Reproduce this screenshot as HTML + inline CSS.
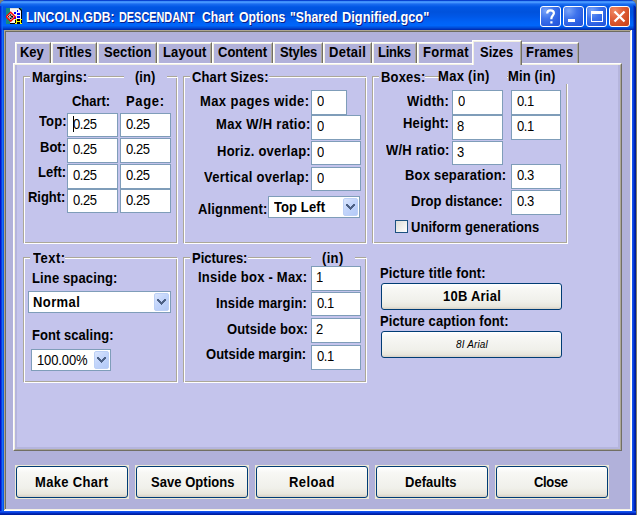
<!DOCTYPE html><html><head><meta charset="utf-8"><style>
html,body{margin:0;padding:0;width:637px;height:515px;overflow:hidden;background:#808070;}
body{position:relative;font-family:"Liberation Sans",sans-serif;}
.b{position:absolute;}
.t{position:absolute;white-space:nowrap;line-height:15px;height:15px;color:#000;transform:scaleY(1.1);transform-origin:0 12px;}
</style></head><body>
<div class="b" style="left:0px;top:0px;width:636px;height:515px;background:#0831d9;border-radius:6px 6px 0 0;"></div>
<div class="b" style="left:0;top:0;width:636px;height:30px;border-radius:6px 6px 0 0;background:linear-gradient(#0842d0 0px,#0842d0 0.6px,#3a8cf8 1.2px,#4696ff 2.5px,#1a6cf0 4px,#0056e4 7px,#0052dc 12px,#0058e8 17px,#0062f6 22px,#0066fa 25.5px,#0050dc 27.5px,#0038c0 29px,#0028a8 30px);"></div>
<div class="b" style="left:0px;top:30px;width:4px;height:485px;background:linear-gradient(90deg,#0010c8 0px,#0010c8 1px,#0a3ce0 1px,#0a3ce0 2px,#1870f8 2px,#1870f8 3px,#0a56ea 3px,#0a56ea 4px);"></div>
<div class="b" style="left:0;top:6px;width:3px;height:24px;background:linear-gradient(90deg,#0016c0 0px,#0016c0 1px,#0a4ce8 1px,#0a4ce8 2px,#1668f6 2px,#1668f6 3px);opacity:0.7;"></div>
<div class="b" style="left:631px;top:5px;width:5px;height:25px;border-top-right-radius:4px;background:linear-gradient(90deg,rgba(0,40,200,0) 0px,rgba(0,40,200,0) 2px,rgba(0,30,170,0.8) 3px,#001890 5px);"></div>
<div class="b" style="left:632px;top:30px;width:4px;height:485px;background:linear-gradient(90deg,#1a5cf0 0px,#0a40e0 1.5px,#0028b8 2.5px,#001890 4px);"></div>
<div class="b" style="left:0px;top:511px;width:636px;height:4px;background:linear-gradient(#1a5cf0 0px,#0a40e0 1.5px,#0028b8 2.5px,#001890 4px);"></div>
<div class="b" style="left:4px;top:30px;width:628px;height:481px;background:#b1b1da;"></div>
<div class="b" style="left:4px;top:30px;width:628px;height:1px;background:#aea68e;"></div>
<div class="b" style="left:4px;top:30px;width:1px;height:481px;background:#aea68e;"></div>
<div class="b" style="left:5px;top:31px;width:626px;height:1px;background:#6e6c60;"></div>
<div class="b" style="left:5px;top:31px;width:1px;height:479px;background:#6e6c60;"></div>
<div class="b" style="left:630px;top:31px;width:1px;height:479px;background:#f4f1e4;"></div>
<div class="b" style="left:631px;top:30px;width:1px;height:481px;background:#ffffff;"></div>
<div class="b" style="left:5px;top:509px;width:626px;height:1px;background:#f4f1e4;"></div>
<div class="b" style="left:4px;top:510px;width:628px;height:1px;background:#ffffff;"></div>
<svg class="b" style="left:6px;top:8px" width="16" height="16" viewBox="0 0 16 16" shape-rendering="crispEdges">
<rect x="0" y="0" width="4" height="16" fill="#178a80"/>
<rect x="4" y="0" width="11" height="15" fill="#f6f6f6"/>
<rect x="4" y="0" width="9" height="1" fill="#dcdcdc"/>
<rect x="14" y="0" width="2" height="2" fill="#178a80"/>
<path d="M13 0 L15.5 2.5" stroke="#000" stroke-width="1.2" shape-rendering="auto"/>
<rect x="15" y="2" width="1" height="9" fill="#000"/>
<rect x="4" y="15" width="5" height="1" fill="#000"/>
<rect x="8" y="4" width="2" height="2" fill="#0000ff"/>
<rect x="8" y="9" width="2" height="2" fill="#0000ff"/>
<rect x="11" y="2" width="1" height="2" fill="#0000ff"/>
<rect x="11" y="5" width="3" height="2" fill="#0000ff"/>
<rect x="11" y="8" width="3" height="2" fill="#0000ff"/>
<path d="M4.7 4.2 L9.2 8.7 L4.7 13.2 L0.2 8.7 Z" fill="#fff" stroke="#ff0000" stroke-width="1.4" shape-rendering="auto"/>
<path d="M4.7 5.9 L7.5 8.7 L4.7 11.5 L1.9 8.7 Z" fill="#000" shape-rendering="auto"/>
<path d="M3.6 7.6 L3.6 9.8 M5.8 7.4 L3.8 8.7 L5.8 10" stroke="#fff" stroke-width="0.8" fill="none" shape-rendering="auto"/>
<rect x="9" y="11" width="7" height="5" fill="#000"/>
<rect x="10" y="11" width="1" height="5" fill="#ffff00"/>
<rect x="14" y="11" width="1" height="5" fill="#ffff00"/>
<rect x="10" y="13" width="5" height="1" fill="#ffff00"/>
<rect x="9" y="11" width="1" height="1" fill="#ffff00"/>
<rect x="15" y="11" width="1" height="1" fill="#ffff00"/>
<rect x="9" y="15" width="1" height="1" fill="#ffff00"/>
<rect x="15" y="15" width="1" height="1" fill="#ffff00"/>
</svg>
<div class="t" style="left:26.46px;top:10px;font-size:13px;font-weight:bold;color:#fff;text-shadow:1px 1px 0 #0a1e8a;transform:scale(0.9366,1.1);transform-origin:0 12px;">LINCOLN.GDB:</div>
<div class="t" style="left:119.26px;top:10px;font-size:13px;font-weight:bold;color:#fff;text-shadow:1px 1px 0 #0a1e8a;transform:scale(0.8371,1.1);transform-origin:0 12px;">DESCENDANT</div>
<div class="t" style="left:202.10px;top:10px;font-size:13px;font-weight:bold;color:#fff;text-shadow:1px 1px 0 #0a1e8a;transform:scale(0.9324,1.1);transform-origin:0 12px;">Chart</div>
<div class="t" style="left:239.40px;top:10px;font-size:13px;font-weight:bold;color:#fff;text-shadow:1px 1px 0 #0a1e8a;transform:scale(0.9429,1.1);transform-origin:0 12px;">Options</div>
<div class="t" style="left:290.26px;top:10px;font-size:13px;font-weight:bold;color:#fff;text-shadow:1px 1px 0 #0a1e8a;transform:scale(0.9429,1.1);transform-origin:0 12px;">&quot;Shared</div>
<div class="t" style="left:341.71px;top:10px;font-size:13px;font-weight:bold;color:#fff;text-shadow:1px 1px 0 #0a1e8a;transform:scale(0.9862,1.1);transform-origin:0 12px;">Dignified.gco&quot;</div>
<div class="b" style="left:540px;top:6px;width:21px;height:21px;box-sizing:border-box;border:1px solid #fff;border-radius:3px;background:radial-gradient(ellipse 120% 120% at 25% 20%,#7aa4f8 0%,#3f74ec 35%,#2a5ee2 65%,#1f4fd6 100%);"></div>
<div class="b" style="left:563px;top:6px;width:21px;height:21px;box-sizing:border-box;border:1px solid #fff;border-radius:3px;background:radial-gradient(ellipse 120% 120% at 25% 20%,#7aa4f8 0%,#3f74ec 35%,#2a5ee2 65%,#1f4fd6 100%);"></div>
<div class="b" style="left:586px;top:6px;width:21px;height:21px;box-sizing:border-box;border:1px solid #fff;border-radius:3px;background:radial-gradient(ellipse 120% 120% at 25% 20%,#7aa4f8 0%,#3f74ec 35%,#2a5ee2 65%,#1f4fd6 100%);"></div>
<div class="b" style="left:609px;top:6px;width:21px;height:21px;box-sizing:border-box;border:1px solid #fff;border-radius:3px;background:radial-gradient(ellipse 120% 120% at 25% 20%,#f08a64 0%,#e0603a 35%,#d24d24 65%,#c33e16 100%);"></div>
<svg class="b" style="left:540px;top:6px" width="21" height="21"><path d="M7.2 7.6 C7.2 5.2 8.6 4.3 10.5 4.3 C12.6 4.3 13.9 5.5 13.9 7.3 C13.9 9.2 11.4 9.8 11.4 12.3 L11.4 13.2 M11.4 15.2 L11.4 17.4" stroke="#fff" stroke-width="2.2" fill="none"/></svg>
<div class="b" style="left:568px;top:19px;width:7px;height:3px;background:#fff;"></div>
<div class="b" style="left:591px;top:11px;width:12px;height:11px;border:1px solid #fff;border-top-width:3px;box-sizing:border-box;"></div>
<svg class="b" style="left:609px;top:6px" width="21" height="21"><path d="M5.5 5.5 L15.5 15.5 M15.5 5.5 L5.5 15.5" stroke="#fff" stroke-width="2.3"/></svg>
<div class="b" style="left:15px;top:42px;width:36px;height:22px;box-sizing:border-box;background:#b1b1da;border-left:1px solid #fff;border-top:1px solid #fff;border-right:1px solid #716f64;"></div>
<div class="b" style="left:16px;top:43px;width:34px;height:21px;box-sizing:border-box;border-left:1px solid #f1efe2;border-top:1px solid #f1efe2;border-right:1px solid #aca899;"></div>
<div class="b" style="left:51px;top:42px;width:46px;height:22px;box-sizing:border-box;background:#b1b1da;border-left:1px solid #fff;border-top:1px solid #fff;border-right:1px solid #716f64;"></div>
<div class="b" style="left:52px;top:43px;width:44px;height:21px;box-sizing:border-box;border-left:1px solid #f1efe2;border-top:1px solid #f1efe2;border-right:1px solid #aca899;"></div>
<div class="b" style="left:97px;top:42px;width:60px;height:22px;box-sizing:border-box;background:#b1b1da;border-left:1px solid #fff;border-top:1px solid #fff;border-right:1px solid #716f64;"></div>
<div class="b" style="left:98px;top:43px;width:58px;height:21px;box-sizing:border-box;border-left:1px solid #f1efe2;border-top:1px solid #f1efe2;border-right:1px solid #aca899;"></div>
<div class="b" style="left:157px;top:42px;width:55px;height:22px;box-sizing:border-box;background:#b1b1da;border-left:1px solid #fff;border-top:1px solid #fff;border-right:1px solid #716f64;"></div>
<div class="b" style="left:158px;top:43px;width:53px;height:21px;box-sizing:border-box;border-left:1px solid #f1efe2;border-top:1px solid #f1efe2;border-right:1px solid #aca899;"></div>
<div class="b" style="left:212px;top:42px;width:61px;height:22px;box-sizing:border-box;background:#b1b1da;border-left:1px solid #fff;border-top:1px solid #fff;border-right:1px solid #716f64;"></div>
<div class="b" style="left:213px;top:43px;width:59px;height:21px;box-sizing:border-box;border-left:1px solid #f1efe2;border-top:1px solid #f1efe2;border-right:1px solid #aca899;"></div>
<div class="b" style="left:273px;top:42px;width:50px;height:22px;box-sizing:border-box;background:#b1b1da;border-left:1px solid #fff;border-top:1px solid #fff;border-right:1px solid #716f64;"></div>
<div class="b" style="left:274px;top:43px;width:48px;height:21px;box-sizing:border-box;border-left:1px solid #f1efe2;border-top:1px solid #f1efe2;border-right:1px solid #aca899;"></div>
<div class="b" style="left:323px;top:42px;width:49px;height:22px;box-sizing:border-box;background:#b1b1da;border-left:1px solid #fff;border-top:1px solid #fff;border-right:1px solid #716f64;"></div>
<div class="b" style="left:324px;top:43px;width:47px;height:21px;box-sizing:border-box;border-left:1px solid #f1efe2;border-top:1px solid #f1efe2;border-right:1px solid #aca899;"></div>
<div class="b" style="left:372px;top:42px;width:45px;height:22px;box-sizing:border-box;background:#b1b1da;border-left:1px solid #fff;border-top:1px solid #fff;border-right:1px solid #716f64;"></div>
<div class="b" style="left:373px;top:43px;width:43px;height:21px;box-sizing:border-box;border-left:1px solid #f1efe2;border-top:1px solid #f1efe2;border-right:1px solid #aca899;"></div>
<div class="b" style="left:417px;top:42px;width:57px;height:22px;box-sizing:border-box;background:#b1b1da;border-left:1px solid #fff;border-top:1px solid #fff;border-right:1px solid #716f64;"></div>
<div class="b" style="left:418px;top:43px;width:55px;height:21px;box-sizing:border-box;border-left:1px solid #f1efe2;border-top:1px solid #f1efe2;border-right:1px solid #aca899;"></div>
<div class="b" style="left:520px;top:42px;width:59px;height:22px;box-sizing:border-box;background:#b1b1da;border-left:1px solid #fff;border-top:1px solid #fff;border-right:1px solid #716f64;"></div>
<div class="b" style="left:521px;top:43px;width:57px;height:21px;box-sizing:border-box;border-left:1px solid #f1efe2;border-top:1px solid #f1efe2;border-right:1px solid #aca899;"></div>
<div class="b" style="left:13px;top:63px;width:609px;height:388px;box-sizing:border-box;background:#c4c4ec;border-left:1px solid #fff;border-top:1px solid #fff;border-right:1px solid #716f64;border-bottom:1px solid #716f64;"></div>
<div class="b" style="left:14px;top:64px;width:607px;height:386px;box-sizing:border-box;border-left:1px solid #f1efe2;border-top:1px solid #f1efe2;border-right:1px solid #aca899;border-bottom:1px solid #aca899;"></div>
<div class="b" style="left:15px;top:65px;width:605px;height:384px;box-sizing:border-box;border-left:2px solid #b5b5dd;border-right:2px solid #b5b5dd;border-bottom:2px solid #b5b5dd;"></div>
<div class="b" style="left:472px;top:40px;width:50px;height:25px;box-sizing:border-box;background:#c4c4ec;border-left:1px solid #fff;border-top:1px solid #fff;border-right:1px solid #716f64;"></div>
<div class="b" style="left:473px;top:41px;width:48px;height:24px;box-sizing:border-box;border-left:1px solid #f1efe2;border-top:1px solid #f1efe2;border-right:1px solid #aca899;"></div>
<div class="b" style="left:23px;top:76px;width:154px;height:167px;border:1px solid #aca899;box-sizing:border-box;"></div>
<div class="b" style="left:24px;top:77px;width:154px;height:167px;border:1px solid #ffffff;box-sizing:border-box;"></div>
<div class="b" style="left:30px;top:75px;width:58px;height:4px;background:#c4c4ec;"></div>
<div class="b" style="left:124px;top:75px;width:43px;height:4px;background:#c4c4ec;"></div>
<div class="b" style="left:183px;top:76px;width:183px;height:167px;border:1px solid #aca899;box-sizing:border-box;"></div>
<div class="b" style="left:184px;top:77px;width:183px;height:167px;border:1px solid #ffffff;box-sizing:border-box;"></div>
<div class="b" style="left:190px;top:75px;width:79px;height:4px;background:#c4c4ec;"></div>
<div class="b" style="left:372px;top:76px;width:195px;height:167px;border:1px solid #aca899;box-sizing:border-box;"></div>
<div class="b" style="left:373px;top:77px;width:195px;height:167px;border:1px solid #ffffff;box-sizing:border-box;"></div>
<div class="b" style="left:379px;top:75px;width:46px;height:4px;background:#c4c4ec;"></div>
<div class="b" style="left:439px;top:65px;width:68px;height:13px;background:#c4c4ec;"></div>
<div class="b" style="left:508px;top:65px;width:64px;height:19px;background:#c4c4ec;"></div>
<div class="b" style="left:507px;top:77px;width:1px;height:1px;background:#fff;"></div>
<div class="b" style="left:23px;top:257px;width:154px;height:125px;border:1px solid #aca899;box-sizing:border-box;"></div>
<div class="b" style="left:24px;top:258px;width:154px;height:125px;border:1px solid #ffffff;box-sizing:border-box;"></div>
<div class="b" style="left:30px;top:256px;width:35px;height:4px;background:#c4c4ec;"></div>
<div class="b" style="left:183px;top:257px;width:183px;height:125px;border:1px solid #aca899;box-sizing:border-box;"></div>
<div class="b" style="left:184px;top:258px;width:183px;height:125px;border:1px solid #ffffff;box-sizing:border-box;"></div>
<div class="b" style="left:190px;top:256px;width:58px;height:4px;background:#c4c4ec;"></div>
<div class="b" style="left:311px;top:256px;width:44px;height:4px;background:#c4c4ec;"></div>
<div class="b" style="left:67px;top:113px;width:51px;height:24px;background:#fff;border:1px solid #7f9db9;box-sizing:border-box;"></div>
<div class="b" style="left:120px;top:113px;width:51px;height:24px;background:#fff;border:1px solid #7f9db9;box-sizing:border-box;"></div>
<div class="b" style="left:67px;top:138px;width:51px;height:25px;background:#fff;border:1px solid #7f9db9;box-sizing:border-box;"></div>
<div class="b" style="left:120px;top:138px;width:51px;height:25px;background:#fff;border:1px solid #7f9db9;box-sizing:border-box;"></div>
<div class="b" style="left:67px;top:164px;width:51px;height:25px;background:#fff;border:1px solid #7f9db9;box-sizing:border-box;"></div>
<div class="b" style="left:120px;top:164px;width:51px;height:25px;background:#fff;border:1px solid #7f9db9;box-sizing:border-box;"></div>
<div class="b" style="left:67px;top:189px;width:51px;height:24px;background:#fff;border:1px solid #7f9db9;box-sizing:border-box;"></div>
<div class="b" style="left:120px;top:189px;width:51px;height:24px;background:#fff;border:1px solid #7f9db9;box-sizing:border-box;"></div>
<div class="b" style="left:311px;top:90px;width:36px;height:25px;background:#fff;border:1px solid #7f9db9;box-sizing:border-box;"></div>
<div class="b" style="left:311px;top:115px;width:50px;height:25px;background:#fff;border:1px solid #7f9db9;box-sizing:border-box;"></div>
<div class="b" style="left:311px;top:141px;width:50px;height:24px;background:#fff;border:1px solid #7f9db9;box-sizing:border-box;"></div>
<div class="b" style="left:311px;top:167px;width:50px;height:24px;background:#fff;border:1px solid #7f9db9;box-sizing:border-box;"></div>
<div class="b" style="left:452px;top:90px;width:51px;height:25px;background:#fff;border:1px solid #7f9db9;box-sizing:border-box;"></div>
<div class="b" style="left:511px;top:90px;width:50px;height:25px;background:#fff;border:1px solid #7f9db9;box-sizing:border-box;"></div>
<div class="b" style="left:452px;top:115px;width:51px;height:25px;background:#fff;border:1px solid #7f9db9;box-sizing:border-box;"></div>
<div class="b" style="left:511px;top:115px;width:50px;height:25px;background:#fff;border:1px solid #7f9db9;box-sizing:border-box;"></div>
<div class="b" style="left:452px;top:141px;width:51px;height:24px;background:#fff;border:1px solid #7f9db9;box-sizing:border-box;"></div>
<div class="b" style="left:511px;top:164px;width:50px;height:25px;background:#fff;border:1px solid #7f9db9;box-sizing:border-box;"></div>
<div class="b" style="left:511px;top:190px;width:50px;height:25px;background:#fff;border:1px solid #7f9db9;box-sizing:border-box;"></div>
<div class="b" style="left:311px;top:266px;width:50px;height:25px;background:#fff;border:1px solid #7f9db9;box-sizing:border-box;"></div>
<div class="b" style="left:311px;top:292px;width:50px;height:24px;background:#fff;border:1px solid #7f9db9;box-sizing:border-box;"></div>
<div class="b" style="left:311px;top:318px;width:50px;height:25px;background:#fff;border:1px solid #7f9db9;box-sizing:border-box;"></div>
<div class="b" style="left:311px;top:345px;width:50px;height:25px;background:#fff;border:1px solid #7f9db9;box-sizing:border-box;"></div>
<div class="b" style="left:268px;top:196px;width:92px;height:22px;background:#fff;border:1px solid #7f9db9;box-sizing:border-box;"></div>
<div class="b" style="left:343px;top:198px;width:15px;height:18px;box-sizing:border-box;border:1px solid #bcd0f6;border-radius:2px;background:linear-gradient(135deg,#dbe6fd 0%,#c3d5fb 45%,#b3c9f7 100%);"></div>
<svg class="b" style="left:346px;top:204px" width="9" height="6" shape-rendering="crispEdges" fill="#4d6185"><rect x="0" y="0" width="2" height="1"/><rect x="7" y="0" width="2" height="1"/><rect x="0" y="1" width="3" height="1"/><rect x="6" y="1" width="3" height="1"/><rect x="1" y="2" width="3" height="1"/><rect x="5" y="2" width="3" height="1"/><rect x="2" y="3" width="5" height="1"/><rect x="3" y="4" width="3" height="1"/><rect x="4" y="5" width="1" height="1"/></svg>
<div class="b" style="left:28px;top:291px;width:143px;height:22px;background:#fff;border:1px solid #7f9db9;box-sizing:border-box;"></div>
<div class="b" style="left:154px;top:293px;width:15px;height:18px;box-sizing:border-box;border:1px solid #bcd0f6;border-radius:2px;background:linear-gradient(135deg,#dbe6fd 0%,#c3d5fb 45%,#b3c9f7 100%);"></div>
<svg class="b" style="left:157px;top:299px" width="9" height="6" shape-rendering="crispEdges" fill="#4d6185"><rect x="0" y="0" width="2" height="1"/><rect x="7" y="0" width="2" height="1"/><rect x="0" y="1" width="3" height="1"/><rect x="6" y="1" width="3" height="1"/><rect x="1" y="2" width="3" height="1"/><rect x="5" y="2" width="3" height="1"/><rect x="2" y="3" width="5" height="1"/><rect x="3" y="4" width="3" height="1"/><rect x="4" y="5" width="1" height="1"/></svg>
<div class="b" style="left:31px;top:349px;width:80px;height:22px;background:#fff;border:1px solid #7f9db9;box-sizing:border-box;"></div>
<div class="b" style="left:94px;top:351px;width:15px;height:18px;box-sizing:border-box;border:1px solid #bcd0f6;border-radius:2px;background:linear-gradient(135deg,#dbe6fd 0%,#c3d5fb 45%,#b3c9f7 100%);"></div>
<svg class="b" style="left:97px;top:357px" width="9" height="6" shape-rendering="crispEdges" fill="#4d6185"><rect x="0" y="0" width="2" height="1"/><rect x="7" y="0" width="2" height="1"/><rect x="0" y="1" width="3" height="1"/><rect x="6" y="1" width="3" height="1"/><rect x="1" y="2" width="3" height="1"/><rect x="5" y="2" width="3" height="1"/><rect x="2" y="3" width="5" height="1"/><rect x="3" y="4" width="3" height="1"/><rect x="4" y="5" width="1" height="1"/></svg>
<div class="b" style="left:395px;top:220px;width:13px;height:13px;box-sizing:border-box;border:1px solid #1c5180;background:linear-gradient(135deg,#dcdcd7,#ffffff);"></div>
<div class="b" style="left:381px;top:283px;width:181px;height:27px;box-sizing:border-box;border:1px solid #003c74;border-radius:3px;background:linear-gradient(#ffffff 0%,#f7f7f4 20%,#f0f0ea 70%,#e8e6dc 90%,#d6d0c5 100%);"></div>
<div class="b" style="left:381px;top:331px;width:181px;height:27px;box-sizing:border-box;border:1px solid #003c74;border-radius:3px;background:linear-gradient(#ffffff 0%,#f7f7f4 20%,#f0f0ea 70%,#e8e6dc 90%,#d6d0c5 100%);"></div>
<div class="b" style="left:15px;top:465px;width:114px;height:34px;background:#ece9d8;"></div>
<div class="b" style="left:16px;top:466px;width:112px;height:32px;box-sizing:border-box;border:1px solid #003c74;border-radius:3px;background:linear-gradient(#ffffff 0%,#f7f7f4 20%,#f0f0ea 70%,#e8e6dc 90%,#d6d0c5 100%);"></div>
<div class="b" style="left:135px;top:465px;width:114px;height:34px;background:#ece9d8;"></div>
<div class="b" style="left:136px;top:466px;width:112px;height:32px;box-sizing:border-box;border:1px solid #003c74;border-radius:3px;background:linear-gradient(#ffffff 0%,#f7f7f4 20%,#f0f0ea 70%,#e8e6dc 90%,#d6d0c5 100%);"></div>
<div class="b" style="left:255px;top:465px;width:114px;height:34px;background:#ece9d8;"></div>
<div class="b" style="left:256px;top:466px;width:112px;height:32px;box-sizing:border-box;border:1px solid #003c74;border-radius:3px;background:linear-gradient(#ffffff 0%,#f7f7f4 20%,#f0f0ea 70%,#e8e6dc 90%,#d6d0c5 100%);"></div>
<div class="b" style="left:375px;top:465px;width:114px;height:34px;background:#ece9d8;"></div>
<div class="b" style="left:376px;top:466px;width:112px;height:32px;box-sizing:border-box;border:1px solid #003c74;border-radius:3px;background:linear-gradient(#ffffff 0%,#f7f7f4 20%,#f0f0ea 70%,#e8e6dc 90%,#d6d0c5 100%);"></div>
<div class="b" style="left:495px;top:465px;width:114px;height:34px;background:#ece9d8;"></div>
<div class="b" style="left:496px;top:466px;width:112px;height:32px;box-sizing:border-box;border:1px solid #003c74;border-radius:3px;background:linear-gradient(#ffffff 0%,#f7f7f4 20%,#f0f0ea 70%,#e8e6dc 90%,#d6d0c5 100%);"></div>
<div class="t" style="left:32px;top:70px;font-size:13px;font-weight:bold;letter-spacing:0.114px;color:#000;">Margins:</div>
<div class="t" style="left:135px;top:70px;font-size:13px;font-weight:bold;letter-spacing:0.000px;color:#000;">(in)</div>
<div class="t" style="left:72px;top:94px;font-size:13px;font-weight:bold;letter-spacing:-0.020px;color:#000;">Chart:</div>
<div class="t" style="left:126px;top:94px;font-size:13px;font-weight:bold;letter-spacing:0.675px;color:#000;">Page:</div>
<div class="t" style="left:39px;top:114px;font-size:13px;font-weight:bold;letter-spacing:0.133px;color:#000;">Top:</div>
<div class="t" style="left:40px;top:140px;font-size:13px;font-weight:bold;letter-spacing:0.000px;color:#000;">Bot:</div>
<div class="t" style="left:38px;top:165px;font-size:13px;font-weight:bold;letter-spacing:0.000px;color:#000;">Left:</div>
<div class="t" style="left:28px;top:190px;font-size:13px;font-weight:bold;letter-spacing:-0.060px;color:#000;">Right:</div>
<div class="t" style="left:192px;top:70px;font-size:13px;font-weight:bold;letter-spacing:0.127px;color:#000;">Chart Sizes:</div>
<div class="t" style="left:200px;top:94px;font-size:13px;font-weight:bold;letter-spacing:0.407px;color:#000;">Max pages wide:</div>
<div class="t" style="left:216px;top:117px;font-size:13px;font-weight:bold;letter-spacing:0.315px;color:#000;">Max W/H ratio:</div>
<div class="t" style="left:217px;top:144px;font-size:13px;font-weight:bold;letter-spacing:0.243px;color:#000;">Horiz. overlap:</div>
<div class="t" style="left:204px;top:170px;font-size:13px;font-weight:bold;letter-spacing:0.287px;color:#000;">Vertical overlap:</div>
<div class="t" style="left:198px;top:202px;font-size:13px;font-weight:bold;letter-spacing:0.156px;color:#000;">Alignment:</div>
<div class="t" style="left:274px;top:200px;font-size:13px;font-weight:bold;letter-spacing:0.100px;color:#000;">Top Left</div>
<div class="t" style="left:381px;top:70px;font-size:13px;font-weight:bold;letter-spacing:0.180px;color:#000;">Boxes:</div>
<div class="t" style="left:438px;top:69px;font-size:13px;font-weight:bold;letter-spacing:0.300px;color:#000;">Max (in)</div>
<div class="t" style="left:508px;top:69px;font-size:13px;font-weight:bold;letter-spacing:0.157px;color:#000;">Min (in)</div>
<div class="t" style="left:407px;top:94px;font-size:13px;font-weight:bold;letter-spacing:0.320px;color:#000;">Width:</div>
<div class="t" style="left:403px;top:116px;font-size:13px;font-weight:bold;letter-spacing:0.167px;color:#000;">Height:</div>
<div class="t" style="left:386px;top:143px;font-size:13px;font-weight:bold;letter-spacing:0.222px;color:#000;">W/H ratio:</div>
<div class="t" style="left:405px;top:168px;font-size:13px;font-weight:bold;letter-spacing:0.207px;color:#000;">Box separation:</div>
<div class="t" style="left:411px;top:194px;font-size:13px;font-weight:bold;letter-spacing:0.046px;color:#000;">Drop distance:</div>
<div class="t" style="left:411px;top:220px;font-size:13px;font-weight:bold;letter-spacing:0.061px;color:#000;">Uniform generations</div>
<div class="t" style="left:33px;top:251px;font-size:13px;font-weight:bold;letter-spacing:0.500px;color:#000;">Text:</div>
<div class="t" style="left:32px;top:271px;font-size:13px;font-weight:bold;letter-spacing:0.133px;color:#000;">Line spacing:</div>
<div class="t" style="left:33px;top:295px;font-size:13px;font-weight:bold;letter-spacing:0.400px;color:#000;">Normal</div>
<div class="t" style="left:32px;top:328px;font-size:13px;font-weight:bold;letter-spacing:0.050px;color:#000;">Font scaling:</div>
<div class="t" style="left:37px;top:353px;font-size:13px;font-weight:normal;letter-spacing:-0.117px;color:#000;">100.00%</div>
<div class="t" style="left:192px;top:251px;font-size:13px;font-weight:bold;letter-spacing:-0.025px;color:#000;">Pictures:</div>
<div class="t" style="left:322px;top:251px;font-size:13px;font-weight:bold;letter-spacing:0.333px;color:#000;">(in)</div>
<div class="t" style="left:198px;top:270px;font-size:13px;font-weight:bold;letter-spacing:0.231px;color:#000;">Inside box - Max:</div>
<div class="t" style="left:216px;top:296px;font-size:13px;font-weight:bold;letter-spacing:0.154px;color:#000;">Inside margin:</div>
<div class="t" style="left:227px;top:322px;font-size:13px;font-weight:bold;letter-spacing:0.127px;color:#000;">Outside box:</div>
<div class="t" style="left:206px;top:347px;font-size:13px;font-weight:bold;letter-spacing:0.036px;color:#000;">Outside margin:</div>
<div class="t" style="left:380px;top:266px;font-size:13px;font-weight:bold;letter-spacing:0.128px;color:#000;">Picture title font:</div>
<div class="t" style="left:380px;top:314px;font-size:13px;font-weight:bold;letter-spacing:0.110px;color:#000;">Picture caption font:</div>
<div class="t" style="left:443px;top:289px;font-size:13px;font-weight:bold;letter-spacing:0.238px;color:#000;">10B Arial</div>
<div class="t" style="left:456px;top:337px;font-size:10px;font-weight:normal;letter-spacing:0.143px;font-style:italic;color:#000;">8I Arial</div>
<div class="t" style="left:35px;top:475px;font-size:13px;font-weight:bold;letter-spacing:0.322px;color:#000;">Make Chart</div>
<div class="t" style="left:151px;top:475px;font-size:13px;font-weight:bold;letter-spacing:0.036px;color:#000;">Save Options</div>
<div class="t" style="left:289px;top:475px;font-size:13px;font-weight:bold;letter-spacing:0.400px;color:#000;">Reload</div>
<div class="t" style="left:405px;top:475px;font-size:13px;font-weight:bold;letter-spacing:0.043px;color:#000;">Defaults</div>
<div class="t" style="left:534px;top:475px;font-size:13px;font-weight:bold;letter-spacing:-0.325px;color:#000;">Close</div>
<div class="t" style="left:20px;top:45px;font-size:13px;font-weight:bold;letter-spacing:-0.050px;color:#000;">Key</div>
<div class="t" style="left:57px;top:45px;font-size:13px;font-weight:bold;letter-spacing:0.180px;color:#000;">Titles</div>
<div class="t" style="left:104px;top:45px;font-size:13px;font-weight:bold;letter-spacing:0.100px;color:#000;">Section</div>
<div class="t" style="left:163px;top:45px;font-size:13px;font-weight:bold;letter-spacing:0.140px;color:#000;">Layout</div>
<div class="t" style="left:218px;top:45px;font-size:13px;font-weight:bold;letter-spacing:0.000px;color:#000;">Content</div>
<div class="t" style="left:280px;top:45px;font-size:13px;font-weight:bold;letter-spacing:-0.200px;color:#000;">Styles</div>
<div class="t" style="left:329px;top:45px;font-size:13px;font-weight:bold;letter-spacing:0.280px;color:#000;">Detail</div>
<div class="t" style="left:378px;top:45px;font-size:13px;font-weight:bold;letter-spacing:-0.250px;color:#000;">Links</div>
<div class="t" style="left:423px;top:45px;font-size:13px;font-weight:bold;letter-spacing:0.300px;color:#000;">Format</div>
<div class="t" style="left:526px;top:45px;font-size:13px;font-weight:bold;letter-spacing:0.200px;color:#000;">Frames</div>
<div class="t" style="left:480px;top:45px;font-size:13px;font-weight:bold;letter-spacing:0.000px;color:#000;">Sizes</div>
<div class="t" style="left:73px;top:117px;font-size:13px;font-weight:normal;letter-spacing:-0.400px;color:#000;">0.25</div>
<div class="t" style="left:126px;top:117px;font-size:13px;font-weight:normal;letter-spacing:-0.400px;color:#000;">0.25</div>
<div class="t" style="left:73px;top:142px;font-size:13px;font-weight:normal;letter-spacing:-0.400px;color:#000;">0.25</div>
<div class="t" style="left:126px;top:142px;font-size:13px;font-weight:normal;letter-spacing:-0.400px;color:#000;">0.25</div>
<div class="t" style="left:73px;top:168px;font-size:13px;font-weight:normal;letter-spacing:-0.400px;color:#000;">0.25</div>
<div class="t" style="left:126px;top:168px;font-size:13px;font-weight:normal;letter-spacing:-0.400px;color:#000;">0.25</div>
<div class="t" style="left:73px;top:193px;font-size:13px;font-weight:normal;letter-spacing:-0.400px;color:#000;">0.25</div>
<div class="t" style="left:126px;top:193px;font-size:13px;font-weight:normal;letter-spacing:-0.400px;color:#000;">0.25</div>
<div class="t" style="left:317px;top:94px;font-size:13px;font-weight:normal;letter-spacing:-0.400px;color:#000;">0</div>
<div class="t" style="left:317px;top:119px;font-size:13px;font-weight:normal;letter-spacing:-0.400px;color:#000;">0</div>
<div class="t" style="left:317px;top:145px;font-size:13px;font-weight:normal;letter-spacing:-0.400px;color:#000;">0</div>
<div class="t" style="left:317px;top:171px;font-size:13px;font-weight:normal;letter-spacing:-0.400px;color:#000;">0</div>
<div class="t" style="left:458px;top:94px;font-size:13px;font-weight:normal;letter-spacing:-0.400px;color:#000;">0</div>
<div class="t" style="left:517px;top:94px;font-size:13px;font-weight:normal;letter-spacing:-0.400px;color:#000;">0.1</div>
<div class="t" style="left:457px;top:119px;font-size:13px;font-weight:normal;letter-spacing:-0.400px;color:#000;">8</div>
<div class="t" style="left:517px;top:119px;font-size:13px;font-weight:normal;letter-spacing:-0.400px;color:#000;">0.1</div>
<div class="t" style="left:457px;top:145px;font-size:13px;font-weight:normal;letter-spacing:-0.400px;color:#000;">3</div>
<div class="t" style="left:517px;top:168px;font-size:13px;font-weight:normal;letter-spacing:-0.400px;color:#000;">0.3</div>
<div class="t" style="left:517px;top:194px;font-size:13px;font-weight:normal;letter-spacing:-0.400px;color:#000;">0.3</div>
<div class="t" style="left:316px;top:270px;font-size:13px;font-weight:normal;letter-spacing:-0.400px;color:#000;">1</div>
<div class="t" style="left:317px;top:296px;font-size:13px;font-weight:normal;letter-spacing:-0.400px;color:#000;">0.1</div>
<div class="t" style="left:316px;top:322px;font-size:13px;font-weight:normal;letter-spacing:-0.400px;color:#000;">2</div>
<div class="t" style="left:317px;top:349px;font-size:13px;font-weight:normal;letter-spacing:-0.400px;color:#000;">0.1</div>
<div class="b" style="left:73px;top:116px;width:1px;height:16px;background:#000;"></div>
</body></html>
